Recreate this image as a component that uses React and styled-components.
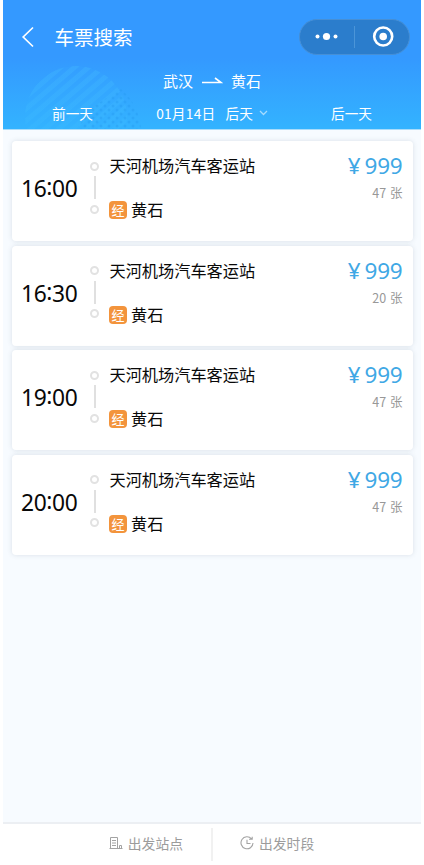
import React from 'react';
import styled, { createGlobalStyle } from 'styled-components';

const Global = createGlobalStyle`
  * { box-sizing: border-box; }
  body { margin: 0; background: #fff; font-family: "Noto Sans CJK SC", sans-serif; }
`;

const Page = styled.div`
  width: 418px;
  height: 865px;
  margin-left: 3px;
  display: flex;
  flex-direction: column;
  background: #f7fbff;
`;

const Header = styled.header`
  height: 130px;
  flex: none;
  display: grid;
  grid-template-rows: 67px 30px 33px;
  color: #fff;
  background: linear-gradient(180deg, #3499ff 0, #3499ff 58px, #33b3ff 129px, #a9dcfb 129px, #a9dcfb 130px);
  position: relative;
`;

const Pattern = styled.svg`
  position: absolute;
  left: 0;
  top: 60px;
`;

const NavBar = styled.div`
  display: flex;
  align-items: center;
  padding: 6px 11px 0 18px;
`;

const Title = styled.h1`
  margin: 1px auto 0 19.5px;
  font-size: 19.5px;
  line-height: 28px;
  font-weight: 400;
`;

const Capsule = styled.div`
  width: 111px;
  height: 36px;
  border: 1px solid #468fd6;
  border-radius: 18px;
  background: #2b7dcc;
`;

const Route = styled.div`
  display: flex;
  align-items: center;
  justify-content: center;
  gap: 8px;
  font-size: 15px;
  line-height: 22px;
  padding: 0 0 3px 0;
  position: relative;
`;

const Days = styled.div`
  display: grid;
  grid-template-columns: 139px 140px 139px;
  font-size: 13.7px;
  line-height: 20px;
  padding-top: 6px;
  text-align: center;
  align-items: start;
  position: relative;
`;

const Today = styled.div`
  height: 20px;
  display: flex;
  align-items: center;
  justify-content: center;
  gap: 6px;
  white-space: nowrap;
`;

const DateText = styled.span`
  letter-spacing: 0.25px;
  margin-right: 4px;
`;

const List = styled.main`
  flex: 1;
  display: flex;
  flex-direction: column;
  gap: 4.6px;
  padding: 11px 8.5px 0 9px;
`;

const Card = styled.article`
  height: 100px;
  display: grid;
  grid-template-columns: 77px 20.5px 1fr auto;
  border-radius: 4px;
  background: #fff;
  box-shadow: 0 0 5px rgba(70, 90, 110, 0.16);
  padding-right: 10px;
`;

const Time = styled.div`
  font: 400 22.8px/30px "Noto Sans", sans-serif;
  letter-spacing: -0.4px;
  padding: 33px 0 0 9px;
  color: #080808;
  white-space: nowrap;
`;

const Colon = styled.span`
  display: inline-block;
  width: 5.8px;
  text-indent: -0.1px;
  transform: translateY(-2px);
`;

const Track = styled.div`
  display: flex;
  flex-direction: column;
  align-items: center;
  justify-content: space-between;
  height: 52px;
  width: 11px;
  margin-top: 20.5px;
`;

const Stop = styled.i`
  width: 9px;
  height: 9px;
  border: 2px solid #e2e2e2;
  border-radius: 50%;
`;

const Link = styled.i`
  width: 2px;
  height: 23px;
  background: #e0e0e0;
`;

const Stations = styled.div`
  font-size: 16.2px;
  line-height: 24px;
  color: #080808;
  padding-top: 12px;
`;

const Destination = styled.div`
  display: flex;
  align-items: center;
  gap: 4px;
  margin: 20px 0 0 -0.5px;
`;

const Via = styled.span`
  width: 18px;
  height: 18px;
  margin-top: 2px;
  border-radius: 4px;
  background: #f3943c;
  color: #fff;
  font-size: 13px;
  line-height: 17px;
  text-align: center;
`;

const Fare = styled.div`
  text-align: right;
  padding-top: 11px;
`;

const Price = styled.div`
  color: #3fa8e5;
  font: 400 22.5px/28px "Noto Sans", "Noto Sans CJK SC", sans-serif;
  letter-spacing: -0.2px;
  display: flex;
  justify-content: flex-end;
  gap: 4px;
`;

const Seats = styled.div`
  color: #989898;
  font-size: 12.5px;
  line-height: 18px;
  margin-top: 4px;
  word-spacing: 1px;
`;

const Footer = styled.footer`
  height: 43px;
  flex: none;
  display: grid;
  grid-template-columns: 208px 2px 208px;
  align-items: center;
  border-top: 2px solid #eceff3;
  background: #fff;
`;

const Filter = styled.div`
  display: flex;
  align-items: center;
  gap: 5px;
  justify-content: ${(p) => (p.$end ? 'flex-end' : 'flex-start')};
  padding: ${(p) => (p.$end ? '0 28px 3px 0' : '0 0 3px 27px')};
  font-size: 13.8px;
  line-height: 20px;
  color: #9c9c9c;
`;

const Divider = styled.i`
  width: 2px;
  height: 33px;
  background: #f1f1f1;
`;

const trips = [
  { hour: '16', minute: '00', seats: 47 },
  { hour: '16', minute: '30', seats: 20 },
  { hour: '19', minute: '00', seats: 47 },
  { hour: '20', minute: '00', seats: 47 },
];

function CirclePattern() {
  return (
    <Pattern width="160" height="69" viewBox="0 0 160 69">
      <defs>
        <clipPath id="disc"><circle cx="73" cy="57" r="51" /></clipPath>
        <pattern id="dots" width="8" height="8" patternUnits="userSpaceOnUse">
          <circle cx="2" cy="2" r="1.5" fill="#2498ef" />
          <circle cx="6" cy="6" r="1.5" fill="#2498ef" />
        </pattern>
        <linearGradient id="stripe" x1="0" x2="0" y1="0" y2="69" gradientUnits="userSpaceOnUse">
          <stop offset="0" stopColor="#40b2ff" stopOpacity="0.42" />
          <stop offset="1" stopColor="#40c0ff" stopOpacity="0.2" />
        </linearGradient>
      </defs>
      <g clipPath="url(#disc)">
        <circle cx="73" cy="57" r="51" fill="#36b3ff" opacity="0.12" />
        <g stroke="url(#stripe)" strokeWidth="5">
          {[0, 1, 2, 3, 4, 5, 6, 7, 8, 9].map((n) => (
            <path key={n} d={`M${-18 + n * 14} 72L${66 + n * 14} 0`} />
          ))}
        </g>
      </g>
      <path d="M138 69H74L88 48L118 29Q136 45 138 69Z" fill="url(#dots)" opacity="0.38" />
    </Pattern>
  );
}

function Trip({ trip }) {
  return (
    <Card>
      <Time>{trip.hour}<Colon>:</Colon>{trip.minute}</Time>
      <Track><Stop /><Link /><Stop /></Track>
      <Stations>
        <div>天河机场汽车客运站</div>
        <Destination><Via>经</Via>黄石</Destination>
      </Stations>
      <Fare>
        <Price><span>¥</span><span>999</span></Price>
        <Seats>{trip.seats} 张</Seats>
      </Fare>
    </Card>
  );
}

export default function App() {
  return (
    <>
      <Global />
      <Page>
        <Header>
          <CirclePattern />
          <NavBar>
            <svg width="14" height="22" viewBox="0 0 14 22" fill="none" stroke="#fff" strokeWidth="1.7">
              <path d="M12 1.5L2.2 11L12 20.5" />
            </svg>
            <Title>车票搜索</Title>
            <Capsule>
              <svg width="109" height="34" viewBox="0 0 109 34" fill="#fff">
                <circle cx="17.5" cy="16.5" r="2" />
                <circle cx="26.5" cy="16.5" r="3.6" />
                <circle cx="35.5" cy="16.5" r="2" />
                <path d="M54.5 6V28" stroke="#4b95d8" />
                <circle cx="83.2" cy="16.5" r="9" fill="none" stroke="#fff" strokeWidth="2.6" />
                <circle cx="83.2" cy="16.5" r="3.8" />
              </svg>
            </Capsule>
          </NavBar>
          <Route>
            <span>武汉</span>
            <svg width="22" height="12" viewBox="0 0 22 12" fill="none" stroke="#fff" strokeWidth="1.6">
              <path d="M1 7.5H20L14 3" />
            </svg>
            <span>黄石</span>
          </Route>
          <Days>
            <span>前一天</span>
            <Today>
              <DateText>01月14日</DateText>
              <span>后天</span>
              <svg width="9" height="6" viewBox="0 0 9 6" fill="none" stroke="#a5dcff" strokeWidth="1.3">
                <path d="M1 1L4.5 4.5L8 1" />
              </svg>
            </Today>
            <span>后一天</span>
          </Days>
        </Header>
        <List>
          {trips.map((trip) => <Trip key={trip.hour + trip.minute} trip={trip} />)}
        </List>
        <Footer>
          <Filter $end>
            <svg width="14" height="14" viewBox="0 0 14 14" fill="none" stroke="#a3a3a3">
              <path d="M1.5 12.5V1.5H8.5V12.5M0.5 12.5H13.5M3 4.5H7M3 7H7M3 9.5H7M10.5 12V9.5H12.5V12" />
            </svg>
            <span>出发站点</span>
          </Filter>
          <Divider />
          <Filter>
            <svg width="14" height="14" viewBox="0 0 14 14" fill="none" stroke="#a3a3a3" strokeWidth="1.1">
              <path d="M11.5 2.8A6 6 0 1 0 13 7M7 3.8V7.5H10.5M9 3.2H12.2V0.8" />
            </svg>
            <span>出发时段</span>
          </Filter>
        </Footer>
      </Page>
    </>
  );
}
